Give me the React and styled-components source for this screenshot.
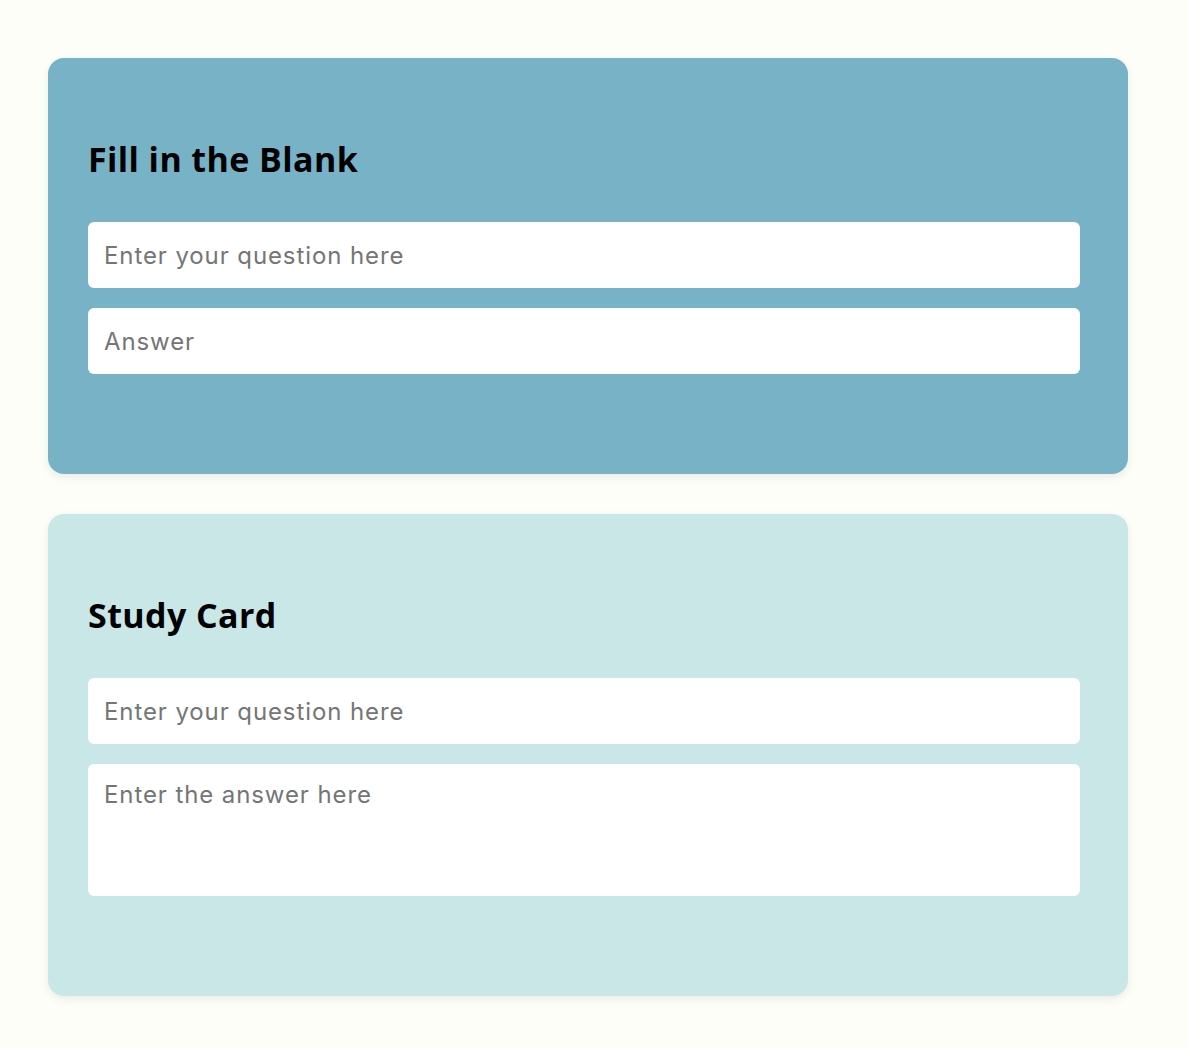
import React from "react";
import styled, { createGlobalStyle } from "styled-components";

const GlobalStyle = createGlobalStyle`
  body {
    margin: 0;
    background: #fdfef8;
    font-family: Inter, "Noto Sans", sans-serif;
  }
`;

const Page = styled.div`
  display: flex;
  flex-direction: column;
  gap: 40px;
  padding: 58px 60px 54px 48px;
`;

const Card = styled.section`
  background: ${({ $bg }) => $bg};
  border-radius: 16px;
  padding: 40px 40px 100px;
  box-shadow: 0 3px 10px rgba(0, 0, 0, 0.08);
  display: flex;
  flex-direction: column;
  gap: 20px;
`;

const Title = styled.h2`
  margin: 42px 0 24px;
  font-family: "Open Sans", Inter, sans-serif;
  font-size: 34px;
  line-height: 38px;
  font-weight: 700;
  color: #000;
  letter-spacing: 0.4px;
`;

const fieldStyles = `
  box-sizing: border-box;
  width: calc(100% - 8px);
  border: none;
  border-radius: 6px;
  background: #fff;
  padding: 16px;
  font-family: Inter, "Noto Sans", sans-serif;
  font-size: 24px;
  letter-spacing: 0.9px;
  color: #222;
  outline: none;
  &::placeholder {
    color: #757575;
  }
`;

const Input = styled.input`
  ${fieldStyles}
  height: 66px;
`;

const TextArea = styled.textarea`
  ${fieldStyles}
  height: 132px;
  resize: none;
  display: block;
`;

const App = () => {
  return (
    <>
      <GlobalStyle />
      <Page>
        <Card $bg="#78b2c7">
          <Title>Fill in the Blank</Title>
          <Input type="text" placeholder="Enter your question here" />
          <Input type="text" placeholder="Answer" />
        </Card>
        <Card $bg="#c8e7e6">
          <Title>Study Card</Title>
          <Input type="text" placeholder="Enter your question here" />
          <TextArea placeholder="Enter the answer here" />
        </Card>
      </Page>
    </>
  );
};

export default App;
